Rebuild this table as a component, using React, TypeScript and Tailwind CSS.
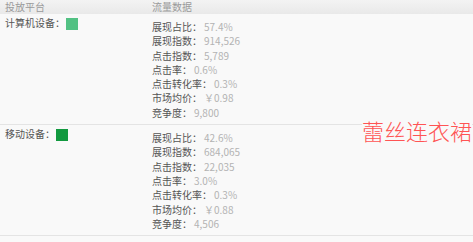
const ROWS = [
  {
    name: '计算机设备',
    color: 'bg-[#52c183]',
    stats: [
      ['展现占比', '57.4%'],
      ['展现指数', '914,526'],
      ['点击指数', '5,789'],
      ['点击率', '0.6%'],
      ['点击转化率', '0.3%'],
      ['市场均价', '￥0.98'],
      ['竞争度', '9,800'],
    ],
  },
  {
    name: '移动设备',
    color: 'bg-[#12993f]',
    stats: [
      ['展现占比', '42.6%'],
      ['展现指数', '684,065'],
      ['点击指数', '22,035'],
      ['点击率', '3.0%'],
      ['点击转化率', '0.3%'],
      ['市场均价', '￥0.88'],
      ['竞争度', '4,506'],
    ],
  },
];

export default function App() {
  return (
    <div
      className="relative w-[473px] h-[242px] overflow-hidden bg-[#f9f9f9] text-[10px]"
      style={{ fontFamily: '"Noto Sans CJK SC", "Noto Sans", sans-serif' }}
    >
      {/* header */}
      <div className="flex h-[14px] items-center bg-gradient-to-b from-[#f3f3f3] to-[#e9e9e9] text-[#9a9a9a] leading-[14px]">
        <div className="w-[152px] pl-[5px]">投放平台</div>
        <div>流量数据</div>
      </div>

      {ROWS.map(row => (
        <div key={row.name} className="flex border-b border-[#e4e4e4]">
          <div className="w-[152px] pl-[5px] pt-[2px]">
            <div className="flex items-center leading-[14px] text-[#555]">
              <span>{row.name}：</span>
              <span className={`ml-[1px] mt-[2px] w-[12px] h-[12px] ${row.color}`}></span>
            </div>
          </div>
          <div className="pt-[6px] pb-[4px]">
            {row.stats.map(([k, v]) => (
              <div key={k} className="leading-[14.3px] whitespace-nowrap">
                <span className="text-[#555]">{k}：</span>
                <span className="text-[#b3b3b3] ml-[2px]">{v}</span>
              </div>
            ))}
          </div>
        </div>
      ))}

      <div className="absolute left-[362px] top-[117px] bg-[#f9f9f9] text-[22px] font-light leading-[26px] text-[#ff5454] whitespace-nowrap">
        蕾丝连衣裙
      </div>
    </div>
  );
}
